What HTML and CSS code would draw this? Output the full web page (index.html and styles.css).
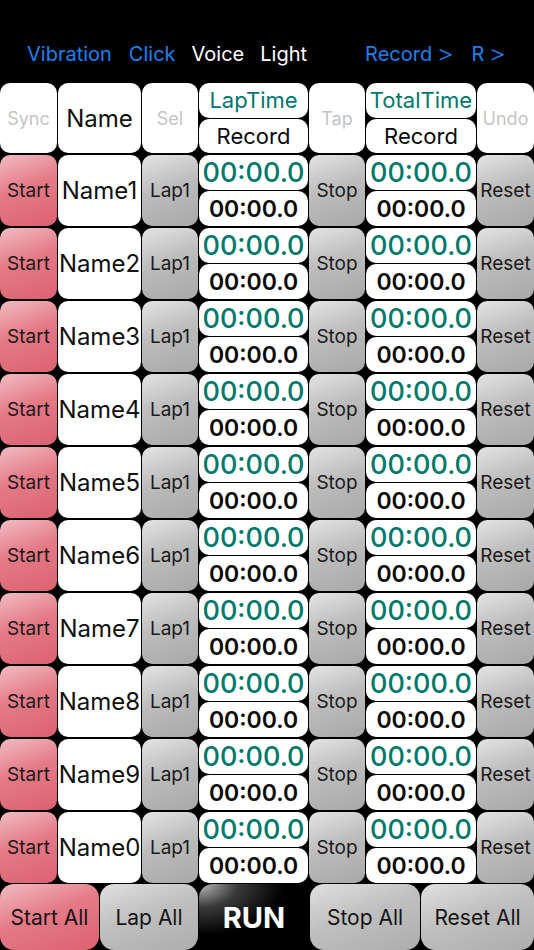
FILE: index.html
```html
<!DOCTYPE html>
<html>
<head>
<meta charset="utf-8">
<link rel="stylesheet" href="styles.css">
</head>
<body>
<div class="app">
  <div class="topbar">
    <span class="opt blue o-vib">Vibration</span>
    <span class="opt blue o-click">Click</span>
    <span class="opt white o-voice">Voice</span>
    <span class="opt white o-light">Light</span>
    <span class="opt blue o-rec">Record<span class="chev">&gt;</span></span>
    <span class="opt blue o-r">R<span class="chev">&gt;</span></span>
  </div>
  <div class="grid">
    <div class="cell white faint">Sync</div>
    <div class="cell white name">Name</div>
    <div class="cell white faint">Sel</div>
    <div class="time"><div class="t top head">LapTime</div><div class="t bot head">Record</div></div>
    <div class="cell white faint">Tap</div>
    <div class="time"><div class="t top head">TotalTime</div><div class="t bot head">Record</div></div>
    <div class="cell white faint">Undo</div>
  </div>
  <div class="rows" id="rows"></div>
  <div class="bottombar">
    <div class="bbtn red">Start All</div>
    <div class="bbtn gray">Lap All</div>
    <div class="bbtn run">RUN</div>
    <div class="bbtn gray">Stop All</div>
    <div class="bbtn gray">Reset All</div>
  </div>
</div>
<script>
var names=["Name1","Name2","Name3","Name4","Name5","Name6","Name7","Name8","Name9","Name0"];
var h="";
names.forEach(function(n){
 h+='<div class="grid row">'+
 '<div class="cell red btn">Start</div>'+
 '<div class="cell white name">'+n+'</div>'+
 '<div class="cell gray btn">Lap1</div>'+
 '<div class="time"><div class="t top">00:00.0</div><div class="t bot">00:00.0</div></div>'+
 '<div class="cell gray btn">Stop</div>'+
 '<div class="time"><div class="t top">00:00.0</div><div class="t bot">00:00.0</div></div>'+
 '<div class="cell gray btn">Reset</div>'+
 '</div>';
});
document.getElementById("rows").innerHTML=h;
</script>
</body>
</html>
```
FILE: styles.css
```css
html, body { margin: 0; padding: 0; background: #000; }
body { font-family: Inter, "Liberation Sans", Roboto, sans-serif; width: 534px; height: 950px; overflow: hidden; }
.app { display: flex; flex-direction: column; height: 950px; }
.topbar { height: 83px; display: flex; align-items: flex-end; padding-bottom: 17px; box-sizing: border-box; font-size: 20px; }
.opt { display: inline-block; line-height: 24px; }
.chev { display: inline-block; margin-left: 6px; font-size: 22px; font-weight: 300; transform: scaleX(1.25); }
.blue { color: #1a80f2; }
.white { color: #fff; }
.o-vib { margin-left: 27px; }
.o-click { margin-left: 17px; }
.o-voice { margin-left: 16px; }
.o-light { margin-left: 16px; }
.o-rec { margin-left: 58px; }
.o-r { margin-left: 19px; }
.grid { display: grid; grid-template-columns: 57px 83px 56px 109px 56px 110px 57px; column-gap: 1px; height: 70px; }
.rows { display: flex; flex-direction: column; gap: 2px; margin-top: 2px; }
.row { height: 71px; }
.cell { border-radius: 10px; display: flex; align-items: center; justify-content: center; color: #111; }
.cell.white { background: #fff; }
.faint { color: #c4c4c4; font-size: 18px; }
.name { font-size: 24px; color: #111; }
.btn { font-size: 19px; color: #1a1a1a; }
.red { background: linear-gradient(160deg, #f2bcc3 0%, #e47a86 45%, #dc6270 100%); }
.gray { background: linear-gradient(160deg, #e4e4e4 0%, #bdbdbd 45%, #a8a8a8 100%); }
.time { display: flex; flex-direction: column; gap: 1px; }
.t { flex: 1; background: #fff; border-radius: 10px; display: flex; align-items: center; justify-content: center; }
.t.top { color: #00786c; font-size: 27px; font-weight: 500; }
.t.bot { color: #0a0a0a; font-size: 23px; font-weight: 600; }
.t.top.head { font-size: 22px; font-weight: 400; }
.t.bot.head { font-size: 22px; font-weight: 400; }
.bottombar { flex: 1; margin-top: 1px; display: grid; grid-template-columns: 99px 98px 110px 110px 113px; column-gap: 1px; }
.bbtn { border-radius: 14px; display: flex; align-items: center; justify-content: center; font-size: 21px; color: #151515; }
.bbtn.red { background: linear-gradient(160deg, #f2bcc3 0%, #e47a86 45%, #dc6270 100%); }
.bbtn.gray { background: linear-gradient(160deg, #e0e0e0 0%, #c0c0c0 45%, #adadad 100%); }
.bbtn.run { background: radial-gradient(ellipse at 0% 0%, #bdbdbd 0%, #3a3a3a 25%, #000 55%); color: #fff; font-size: 29px; font-weight: 700; border-radius: 14px 0 0 0; }
```
